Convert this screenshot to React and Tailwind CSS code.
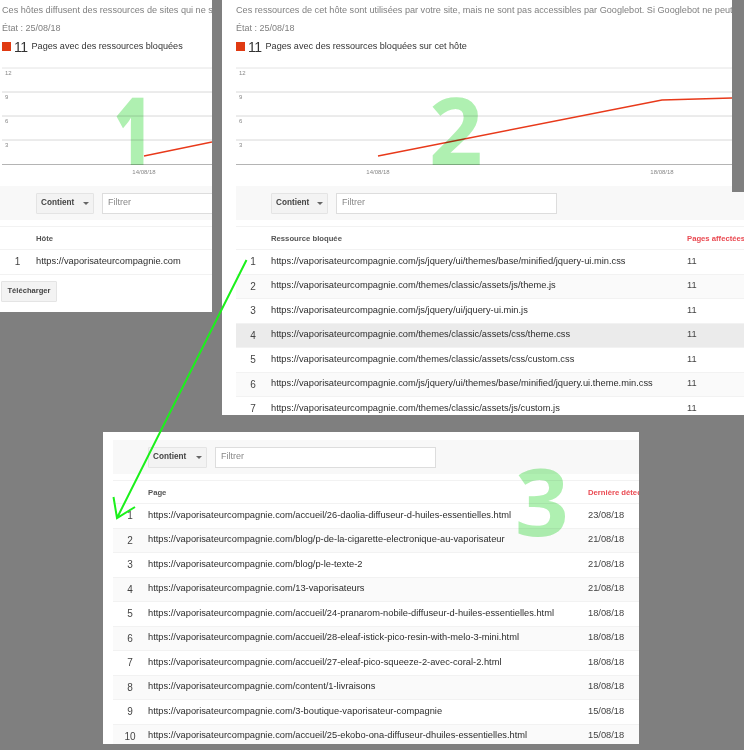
const FONT = "font-['Liberation_Sans',Arial,sans-serif]";

const res2 = [
  "https://vaporisateurcompagnie.com/js/jquery/ui/themes/base/minified/jquery-ui.min.css",
  "https://vaporisateurcompagnie.com/themes/classic/assets/js/theme.js",
  "https://vaporisateurcompagnie.com/js/jquery/ui/jquery-ui.min.js",
  "https://vaporisateurcompagnie.com/themes/classic/assets/css/theme.css",
  "https://vaporisateurcompagnie.com/themes/classic/assets/css/custom.css",
  "https://vaporisateurcompagnie.com/js/jquery/ui/themes/base/minified/jquery.ui.theme.min.css",
  "https://vaporisateurcompagnie.com/themes/classic/assets/js/custom.js",
].map((u) => [u, "11"]);

const res3 = [
  ["https://vaporisateurcompagnie.com/accueil/26-daolia-diffuseur-d-huiles-essentielles.html", "23/08/18"],
  ["https://vaporisateurcompagnie.com/blog/p-de-la-cigarette-electronique-au-vaporisateur", "21/08/18"],
  ["https://vaporisateurcompagnie.com/blog/p-le-texte-2", "21/08/18"],
  ["https://vaporisateurcompagnie.com/13-vaporisateurs", "21/08/18"],
  ["https://vaporisateurcompagnie.com/accueil/24-pranarom-nobile-diffuseur-d-huiles-essentielles.html", "18/08/18"],
  ["https://vaporisateurcompagnie.com/accueil/28-eleaf-istick-pico-resin-with-melo-3-mini.html", "18/08/18"],
  ["https://vaporisateurcompagnie.com/accueil/27-eleaf-pico-squeeze-2-avec-coral-2.html", "18/08/18"],
  ["https://vaporisateurcompagnie.com/content/1-livraisons", "18/08/18"],
  ["https://vaporisateurcompagnie.com/3-boutique-vaporisateur-compagnie", "15/08/18"],
  ["https://vaporisateurcompagnie.com/accueil/25-ekobo-ona-diffuseur-dhuiles-essentielles.html", "15/08/18"],
];

function FilterBar({ btnW = "w-[58px]", pad = "pl-[35px]" }) {
  return (
    <div className={`flex h-[34px] shrink-0 items-center gap-2 bg-[#f8f8f8] ${pad}`}>
      <div className={`flex h-[21px] shrink-0 items-center justify-between rounded-[1px] border border-[#e4e4e4] bg-[#f3f3f3] px-[4px] pt-[1px] text-[8.2px] font-bold text-[#444] ${btnW}`}>
        <span>Contient</span>
        <span className="h-0 w-0 border-x-[3px] border-t-[3px] border-x-transparent border-t-[#666]" />
      </div>
      <div className="flex h-[21px] w-[221px] shrink-0 items-center border border-[#ddd] bg-white pl-[5px] text-[9px] text-[#888]">
        Filtrer
      </div>
    </div>
  );
}

function Table({ head, valHead, rows, urlW, highlight, pad = "w-[35px]" }) {
  return (
    <div className="mt-[6px]">
      <div className="flex h-[24px] items-center border-y border-[#f2f2f2] pt-[1px] text-[7.7px] font-bold text-[#555]">
        <div className={`shrink-0 ${pad}`} />
        <div className={`shrink-0 ${urlW}`}>{head}</div>
        <div className="whitespace-nowrap text-[#ea4a52]">{valHead}</div>
      </div>
      {rows.map(([u, v], i) => (
        <div
          key={u}
          className={`flex h-[24.5px] items-center border-b border-[#f2f2f2] text-[9.3px] text-[#2d2d2d] ${
            highlight === i ? "bg-[#ebebeb]" : i % 2 ? "bg-[#fafafa]" : "bg-white"
          }`}
        >
          <div className={`shrink-0 pr-[1px] text-center text-[10px] text-[#444] ${pad}`}>{i + 1}</div>
          <div className={`shrink-0 whitespace-nowrap ${urlW}`}>{u}</div>
          {v && <div className="whitespace-nowrap text-[#444]">{v}</div>}
        </div>
      ))}
    </div>
  );
}

function Chart({ width, line, dates }) {
  const ys = [68, 92, 116, 140];
  return (
    <svg width={width} height={112} viewBox={`0 62 ${width} 112`} className="mt-[6px] block shrink-0">
      {ys.map((y, i) => (
        <line key={y} x1="0" x2={width} y1={y} y2={y} stroke={i === 0 ? "#e4e4e4" : "#d8d8d8"} strokeWidth="1" />
      ))}
      <line x1="0" x2={width} y1="164.5" y2="164.5" stroke="#b4b4b4" strokeWidth="1.2" />
      {["12", "9", "6", "3"].map((t, i) => (
        <text key={t} x="3" y={ys[i] + 7} fontSize="6" fill="#888" fontFamily="Liberation Sans">
          {t}
        </text>
      ))}
      <polyline points={line} fill="none" stroke="#e8391a" strokeWidth="1.4" />
      {dates.map(([x, t]) => (
        <text key={t} x={x} y="174" fontSize="6" fill="#888" textAnchor="middle" fontFamily="Liberation Sans">
          {t}
        </text>
      ))}
    </svg>
  );
}

function Summary({ description, label, descWidth }) {
  return (
    <div className="shrink-0 whitespace-nowrap">
      <div className={`flex h-[20px] items-center overflow-hidden pt-[1px] text-[9.15px] text-[#808080] ${descWidth}`}>{description}</div>
      <div className="flex h-[17px] items-center text-[9px] text-[#808080]">État : 25/08/18</div>
      <div className="flex h-[19px] items-center">
        <span className="h-[9px] w-[9px] bg-[#e03a12]" />
        <span className="ml-[3px] text-[14px] leading-none tracking-[-0.5px] text-[#333]">11</span>
        <span className="ml-[4px] text-[9.1px] text-[#333]">{label}</span>
      </div>
    </div>
  );
}

function Numeral({ children, className }) {
  return (
    <span className={`pointer-events-none absolute font-['Open_Sans',sans-serif] text-[94px] leading-none text-[#aff0b1] mix-blend-multiply ${className}`}>
      {children}
    </span>
  );
}

export default function App() {
  return (
    <div className={`relative h-[750px] w-[744px] overflow-hidden bg-[#7f7f7f] blur-[0.3px] ${FONT}`}>
      {/* Window 2 */}
      <section className="absolute left-[222px] top-0 h-[415px] w-[522px] overflow-hidden bg-white pl-[14px]">
        <Summary
          descWidth="w-[496px]"
          label="Pages avec des ressources bloquées sur cet hôte"
          description="Ces ressources de cet hôte sont utilisées par votre site, mais ne sont pas accessibles par Googlebot. Si Googlebot ne peut accéder"
        />
        <Chart width={496} line="142,156 426,100 496,98" dates={[[142, "14/08/18"], [426, "18/08/18"]]} />
        <div className="mt-[12px]">
          <FilterBar btnW="w-[57px]" />
        </div>
        <Table head="Ressource bloquée" valHead="Pages affectées" rows={res2} urlW="w-[416px]" highlight={3} />
      </section>
      <div className="absolute left-[732px] top-0 h-[192px] w-[12px] bg-[#7f7f7f]" />

      {/* Window 1 */}
      <section className="absolute left-0 top-0 h-[312px] w-[212px] overflow-hidden bg-white">
        <div className="pl-[2px]">
          <Summary
            descWidth="w-[210px]"
            label="Pages avec des ressources bloquées"
            description="Ces hôtes diffusent des ressources de sites qui ne sont pas accessibles"
          />
          <Chart width={210} line="142,156 210,142" dates={[[142, "14/08/18"]]} />
        </div>
        <div className="mt-[12px]">
          <FilterBar pad="pl-[36px]" />
        </div>
        <Table head="Hôte" valHead="" rows={[["https://vaporisateurcompagnie.com", ""]]} urlW="w-[170px]" pad="w-[36px]" />
        <button className="ml-[1px] mt-[6px] h-[21px] w-[56px] rounded-[1px] border border-[#e4e4e4] bg-[#f3f3f3] text-[7.6px] font-bold text-[#444]">
          Télécharger
        </button>
      </section>

      {/* Window 3 */}
      <section className="absolute left-[103px] top-[432px] h-[312px] w-[536px] overflow-hidden bg-white pl-[10px] pt-[8px]">
        <FilterBar btnW="w-[59px]" />
        <Table head="Page" valHead="Dernière détection" rows={res3} urlW="w-[440px]" />
      </section>

      <Numeral className="left-[114px] top-[82px] origin-left scale-x-[0.68] font-extrabold">1</Numeral>
      <Numeral className="left-[429px] top-[82px] font-bold">2</Numeral>
      <Numeral className="left-[515px] top-[453px] font-bold">3</Numeral>

      {/* Arrow */}
      <svg className="pointer-events-none absolute left-0 top-0" width="744" height="750" viewBox="0 0 744 750">
        <path d="M246.5 260 L117 518 M113.5 497 L117 518 L135 507" fill="none" stroke="#1cf01c" strokeWidth="2" />
      </svg>
    </div>
  );
}
